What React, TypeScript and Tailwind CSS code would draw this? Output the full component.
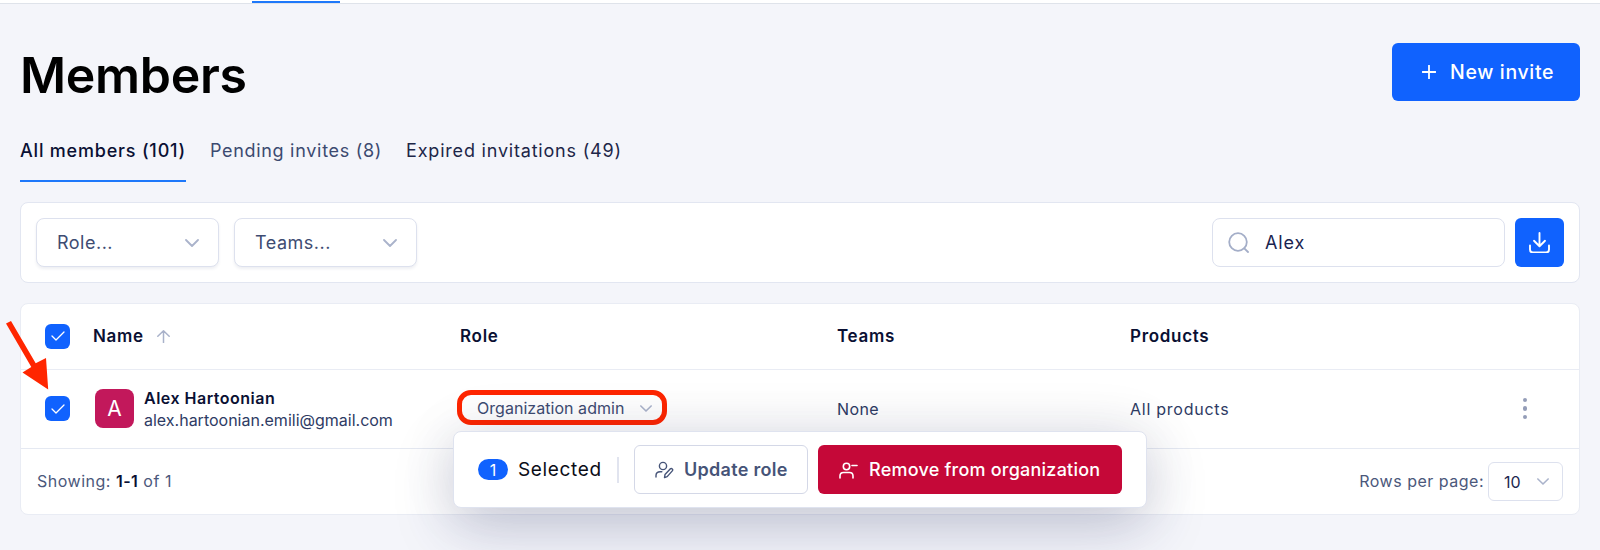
import React, { useState } from "react"

type Tab = {
  id: string
  label: string
  className: string
}

const tabs: Tab[] = [
  { id: "all", label: "All members (101)", className: "tracking-[0.8px] font-medium text-[#0a1033]" },
  { id: "pending", label: "Pending invites (8)", className: "tracking-[0.7px] text-[#3c4a70]" },
  { id: "expired", label: "Expired invitations (49)", className: "tracking-[0.8px] text-[#1d2648]" },
]

const ChevronIcon = ({ className }: { className: string }) => (
  <svg className={className} viewBox="0 0 14 8" fill="none" stroke="currentColor" strokeWidth="1.8" strokeLinecap="round" strokeLinejoin="round">
    <path d="M1 1l6 6 6-6" />
  </svg>
)

const Checkbox = () => {
  const [checked, setChecked] = useState(true)
  return (
    <button
      className="flex h-[25px] w-[25px] shrink-0 items-center justify-center rounded-[6px] bg-[#1062fe]"
      onClick={() => setChecked(!checked)}
    >
      {checked && (
        <svg className="h-[10px] w-[14px]" viewBox="0 0 14 10" fill="none" stroke="white" strokeWidth="1.3" strokeLinecap="round" strokeLinejoin="round">
          <path d="M1 5l4 4 8-8" />
        </svg>
      )}
    </button>
  )
}

const FilterSelect = ({ label }: { label: string }) => (
  <button className="flex h-[49px] w-[183px] items-center justify-between rounded-lg border border-[#dde1ee] bg-white pr-[19px] pl-[20px] text-[18px] tracking-[0.5px] text-[#3e4c72] shadow-[0_2px_3px_rgba(40,50,100,0.08)]">
    <span>{label}</span>
    <ChevronIcon className="h-[8px] w-[14px] text-[#aab3cb]" />
  </button>
)

const SelectionBar = () => (
  <div className="absolute top-[431px] left-[453px] flex h-[77px] w-[694px] items-center rounded-lg border border-[#dfe3ef] bg-white pl-[24px] shadow-[0_0_60px_rgba(20,20,40,0.08),0_20px_60px_rgba(35,45,105,0.22)]">
    <span className="flex h-[21px] w-[30px] items-center justify-center rounded-full bg-[#1062fe] text-[16px] text-white">1</span>
    <span className="ml-[10px] w-[84px] pt-px text-[19px] tracking-[0.65px] whitespace-nowrap text-[#0b0d18]">Selected</span>
    <span className="ml-[15px] h-[26px] w-[2px] bg-[#e1e4ef]"></span>
    <button className="ml-[15px] flex h-[49px] w-[174px] items-center rounded-[6px] border border-[#d4d8e7] pl-[20px] text-[#465478]">
      <svg className="h-[18px] w-[19px] shrink-0" viewBox="0 0 19 18" fill="none" stroke="currentColor" strokeWidth="1.4" strokeLinecap="round" strokeLinejoin="round">
        <circle cx="8" cy="5" r="3.6" />
        <path d="M1 16v-1.5c0-2.4 1.8-3.8 4.2-3.8h1.6" />
        <path d="M9.5 16.5l.5-3 5.2-5.6c1.5-1.2 3.3.5 2.1 2l-5.1 5.7z" />
      </svg>
      <span className="ml-[10px] text-[18px] font-semibold tracking-[0.3px] whitespace-nowrap">Update role</span>
    </button>
    <button className="ml-[10px] flex h-[49px] w-[304px] items-center rounded-[6px] bg-[#c50838] pl-[21px] text-white">
      <svg className="mt-px h-[17px] w-[19px] shrink-0" viewBox="0 0 19 17" fill="none" stroke="currentColor" strokeWidth="1.6" strokeLinecap="round" strokeLinejoin="round">
        <circle cx="7.5" cy="4.5" r="3.2" />
        <path d="M1 16v-2c0-2 1.5-3.5 3.5-3.5h6c2 0 3.5 1.5 3.5 3.5v2" />
        <path d="M13 3.5h5" />
      </svg>
      <span className="ml-[11px] text-[18px] font-medium tracking-[0.23px] whitespace-nowrap">Remove from organization</span>
    </button>
  </div>
)

const App = () => {
  const [activeTab, setActiveTab] = useState("all")
  const [search, setSearch] = useState("Alex")

  return (
    <div className="relative h-[550px] w-[1600px] overflow-hidden bg-[#f4f5fa] font-['Inter','Liberation_Sans',sans-serif]">
      <div className="flex h-[4px] items-center border-b border-[#dfe3ea] bg-white pl-[252px]">
        <div className="mt-px h-[2px] w-[88px] bg-[#1e78fa]"></div>
      </div>

      <div className="flex h-[115px] items-start justify-between pr-[20px] pl-[20px]">
        <h1 className="mt-[33px] text-[50px] leading-[76px] font-semibold tracking-[-0.3px] text-black">Members</h1>
        <button className="mt-[39px] flex h-[58px] w-[188px] items-center rounded-[6px] bg-[#1062fe] pl-[30px] text-white">
          <svg className="h-[14px] w-[14px]" viewBox="0 0 14 14" stroke="currentColor" strokeWidth="1.8" strokeLinecap="round">
            <path d="M7 .5v13M.5 7h13" />
          </svg>
          <span className="ml-[14px] pt-[2px] text-[19.5px] font-medium tracking-[0.65px] whitespace-nowrap">New invite</span>
        </button>
      </div>

      <div className="flex h-[63px] gap-[24px] pl-[20px]">
        {tabs.map((tab) => (
          <button
            key={tab.id}
            className={`flex h-[63px] flex-col justify-between pt-[18px] text-[18px] whitespace-nowrap ${tab.className}`}
            onClick={() => setActiveTab(tab.id)}
          >
            <span>{tab.label}</span>
            {activeTab === tab.id && <span className="h-[2px] w-full bg-[#1e78fa]"></span>}
          </button>
        ))}
      </div>

      <div className="mx-[20px] mt-[20px] flex h-[81px] items-center gap-[15px] rounded-lg border border-[#e2e6f1] bg-white px-[15px]">
        <FilterSelect label="Role..." />
        <FilterSelect label="Teams..." />
        <div className="ml-auto flex gap-[10px]">
          <label className="flex h-[49px] w-[293px] items-center rounded-lg border border-[#dde1ee] pl-[15px]">
            <svg className="h-[21px] w-[21px] shrink-0 text-[#a4aec8]" viewBox="0 0 21 21" fill="none" stroke="currentColor" strokeWidth="1.8" strokeLinecap="round">
              <circle cx="10" cy="10" r="8.8" />
              <path d="M16.3 16.3l3.7 3.7" />
            </svg>
            <input
              className="ml-[16px] w-[180px] bg-transparent text-[18px] tracking-[0.9px] text-[#1a2450] outline-none"
              value={search}
              onChange={(e) => setSearch(e.target.value)}
            />
          </label>
          <button className="flex h-[49px] w-[49px] items-center justify-center rounded-[6px] bg-[#1062fe] text-white">
            <svg className="h-[21px] w-[21px]" viewBox="0 0 21 21" fill="none" stroke="currentColor" strokeWidth="1.9" strokeLinecap="round" strokeLinejoin="round">
              <path d="M10.5 1v13M5 8.8l5.5 5.4L16 8.8M1 13.5v4a3 3 0 0 0 3 3h13a3 3 0 0 0 3-3v-4" />
            </svg>
          </button>
        </div>
      </div>

      <div className="mx-[20px] mt-[20px] flex h-[212px] flex-col rounded-lg border border-[#e9ecf4] bg-white text-[16px] text-[#2e3b64]">
        <div className="grid h-[66px] shrink-0 grid-cols-[73px_366px_377px_293px_1fr] items-center border-b border-[#e9ecf4] text-[17px] font-semibold tracking-[0.7px] text-[#0a1033]">
          <div className="pb-px pl-[24px]">
            <Checkbox />
          </div>
          <div className="flex items-center">
            <span className="-ml-px">Name</span>
            <svg className="ml-[13px] h-[13px] w-[13px] text-[#a9b2ca]" viewBox="0 0 13 13" fill="none" stroke="currentColor" strokeWidth="1.5" strokeLinecap="round" strokeLinejoin="round">
              <path d="M6.5 12.5V1M.8 6.3L6.5.8l5.7 5.5" />
            </svg>
          </div>
          <div>Role</div>
          <div>Teams</div>
          <div>Products</div>
        </div>

        <div className="grid h-[79px] shrink-0 grid-cols-[73px_363px_380px_293px_1fr] items-center border-b border-[#e5e9f2] pb-px">
          <div className="pl-[24px]">
            <Checkbox />
          </div>
          <div className="flex items-center">
            <div className="ml-px flex h-[39px] w-[39px] items-center justify-center rounded-lg bg-[#c2185b] text-[21px] text-white">A</div>
            <div className="ml-[10px] whitespace-nowrap">
              <div className="text-[16px] leading-[22px] font-semibold tracking-[0.5px] text-[#0a1033]">Alex Hartoonian</div>
              <div className="text-[16px] leading-[22px]">alex.hartoonian.emili@gmail.com</div>
            </div>
          </div>
          <button className="mb-[2px] flex h-[35px] w-[210px] items-center rounded-[14px] border-[5px] border-[#ff2600] pt-px pl-[15px] text-[#3e4c72]">
            <span className="w-[148px] text-left tracking-[0.04px] whitespace-nowrap">Organization admin</span>
            <ChevronIcon className="ml-[15px] h-[7px] w-[12px] text-[#aab3cb]" />
          </button>
          <div className="tracking-[0.4px]">None</div>
          <div className="flex items-center justify-between">
            <span className="tracking-[0.75px]">All products</span>
            <button className="mr-[52px] flex flex-col gap-[4px]">
              <span className="h-[4.5px] w-[4.5px] rounded-full bg-[#949db8]"></span>
              <span className="h-[4.5px] w-[4.5px] rounded-full bg-[#949db8]"></span>
              <span className="h-[4.5px] w-[4.5px] rounded-full bg-[#949db8]"></span>
            </button>
          </div>
        </div>

        <div className="flex grow items-center justify-between pr-[16px] pl-[16px] text-[#4b587b]">
          <div className="pb-[2px] tracking-[0.5px]">
            Showing: <span className="font-semibold text-[#0a1033]">1-1</span> of 1
          </div>
          <div className="flex items-center gap-[4px]">
            <span className="pb-[2px] tracking-[0.5px]">Rows per page:</span>
            <button className="flex h-[39px] w-[75px] items-center justify-between rounded-[6px] border border-[#dde1ee] pr-[13px] pl-[15px] text-[#1d2850]">
              <span>10</span>
              <ChevronIcon className="h-[7px] w-[12px] text-[#aab3cb]" />
            </button>
          </div>
        </div>
      </div>

      <SelectionBar />

      <svg className="absolute top-[316px] left-0 h-[76px] w-[56px]" viewBox="0 0 56 76" fill="#ff2600">
        <path d="M6 7.5L11 5l24.7 42.2L46 42l2.2 31.5L22.5 56.5 31.3 51z" />
      </svg>
    </div>
  )
}

export default App
